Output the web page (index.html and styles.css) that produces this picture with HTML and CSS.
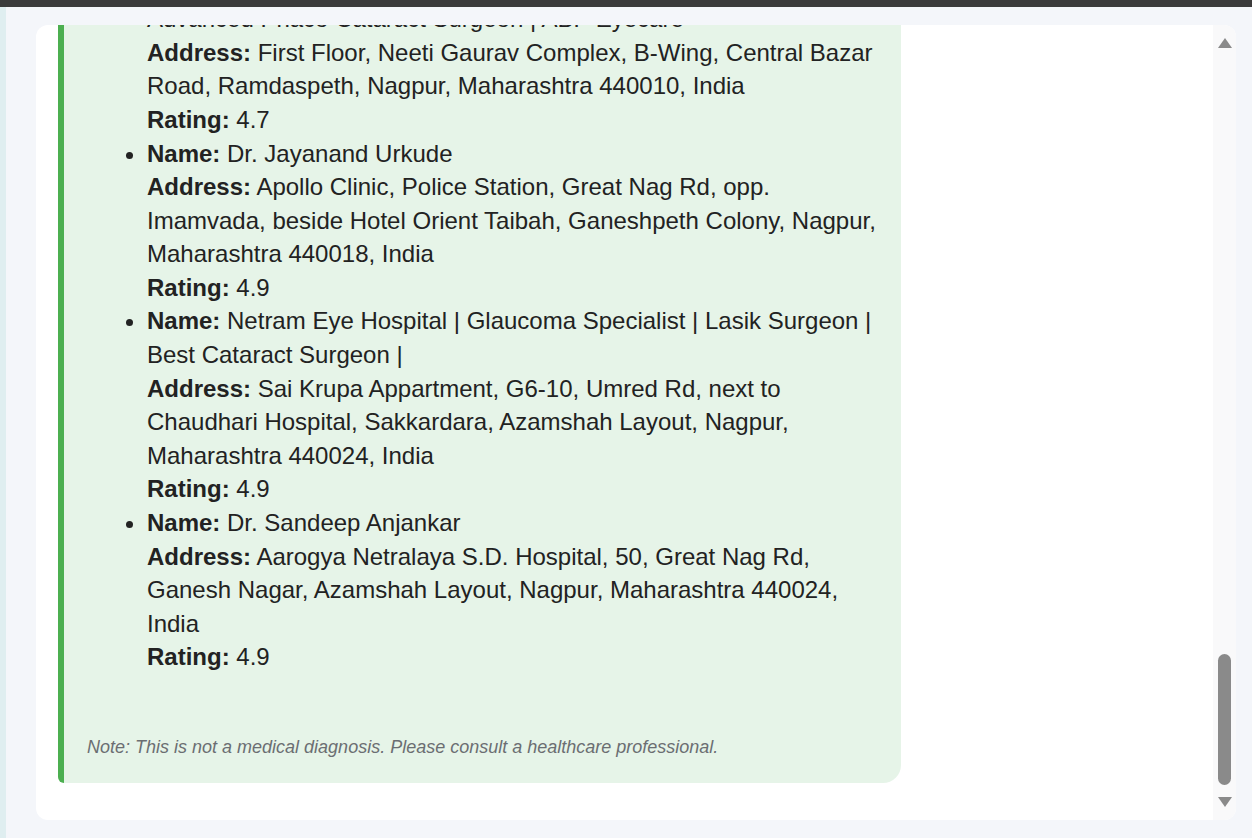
FILE: index.html
```html
<!DOCTYPE html>
<html lang="en">
<head>
<meta charset="utf-8">
<title>Eye specialists</title>
<link rel="stylesheet" href="styles.css">
</head>
<body>
<div class="topbar"></div>
<div class="page">
  <div class="strip"></div>
  <div class="main">
    <div class="card">
      <div class="chat">
        <div class="bubble">
          <p class="intro">Here are some eye specialists near you in Nagpur:</p>
          <ul class="list">
            <li><b>Name:</b> Dr. Amit Agrawal | Best Eye Specialist in Nagpur<br>
              <b>Address:</b> Dhantoli, Nagpur, Maharashtra 440012, India<br>
              <b>Rating:</b> 4.8</li>
            <li><b>Name:</b> Dr. Pallavi Bhave | Best Eye Specialist | Lasik Surgeon | Advanced Phaco Cataract Surgeon | ABP Eyecare<br>
              <b>Address:</b> First Floor, Neeti Gaurav Complex, B-Wing, Central Bazar Road, Ramdaspeth, Nagpur, Maharashtra 440010, India<br>
              <b>Rating:</b> 4.7</li>
            <li><b>Name:</b> Dr. Jayanand Urkude<br>
              <b>Address:</b> Apollo Clinic, Police Station, Great Nag Rd, opp. Imamvada, beside Hotel Orient Taibah, Ganeshpeth Colony, Nagpur, Maharashtra 440018, India<br>
              <b>Rating:</b> 4.9</li>
            <li><b>Name:</b> Netram Eye Hospital | Glaucoma Specialist | Lasik Surgeon | Best Cataract Surgeon |<br>
              <b>Address:</b> Sai Krupa Appartment, G6-10, Umred Rd, next to Chaudhari Hospital, Sakkardara, Azamshah Layout, Nagpur, Maharashtra 440024, India<br>
              <b>Rating:</b> 4.9</li>
            <li><b>Name:</b> Dr. Sandeep Anjankar<br>
              <b>Address:</b> Aarogya Netralaya S.D. Hospital, 50, Great Nag Rd, Ganesh Nagar, Azamshah Layout, Nagpur, Maharashtra 440024, India<br>
              <b>Rating:</b> 4.9</li>
          </ul>
          <p class="note">Note: This is not a medical diagnosis. Please consult a healthcare professional.</p>
        </div>
      </div>
      <div class="scrollbar">
        <div class="arrow up"></div>
        <div class="track"><div class="thumb"></div></div>
        <div class="arrow down"></div>
      </div>
    </div>
  </div>
</div>
</body>
</html>
```
FILE: styles.css
```css
html, body {
  margin: 0;
  padding: 0;
  height: 100%;
}
body {
  background: #f4f6fa;
  font-family: "Liberation Sans", Arial, sans-serif;
  color: #222;
  overflow: hidden;
  display: flex;
  flex-direction: column;
}
.topbar {
  height: 7px;
  background: #3b3b3b;
  flex: none;
}
.page {
  flex: 1;
  display: flex;
  min-height: 0;
}
.strip {
  width: 6px;
  background: #dfeef0;
  flex: none;
}
.main {
  flex: 1;
  padding: 18px 16px 18px 30px;
  display: flex;
  min-height: 0;
}
.card {
  width: 1200px;
  background: #ffffff;
  border-radius: 12px;
  overflow: hidden;
  display: flex;
}
.chat {
  flex: 1;
  overflow: hidden;
  display: flex;
  flex-direction: column;
  justify-content: flex-end;
  padding: 0 22px 37px 22px;
}
.bubble {
  flex: none;
  width: 843px;
  box-sizing: border-box;
  background: #e6f4e8;
  border-left: 6px solid #4caf50;
  border-radius: 6px 18px 18px 6px;
  padding: 20px 24px 23px 23px;
  font-size: 24px;
  line-height: 33.6px;
}
.intro {
  margin: 0 0 10px;
}
.list {
  margin: 0;
  padding-left: 60px;
}
.list b {
  font-weight: bold;
}
.note {
  margin: 60px 0 0;
  font-size: 18px;
  line-height: 26px;
  font-style: italic;
  color: #6b6e72;
}
.scrollbar {
  width: 23px;
  flex: none;
  background: #f9f9fa;
  display: flex;
  flex-direction: column;
  align-items: center;
}
.arrow {
  width: 0;
  height: 0;
  border-left: 7px solid transparent;
  border-right: 7px solid transparent;
  flex: none;
}
.arrow.up {
  margin-top: 13px;
  border-bottom: 10px solid #8a8a8a;
}
.arrow.down {
  margin-bottom: 13px;
  border-top: 10px solid #8a8a8a;
}
.track {
  flex: 1;
  width: 100%;
  display: flex;
  flex-direction: column;
  justify-content: flex-end;
  align-items: center;
  padding-bottom: 12px;
}
.thumb {
  width: 13px;
  height: 131px;
  border-radius: 7px;
  background: #8a8a8a;
}
```
